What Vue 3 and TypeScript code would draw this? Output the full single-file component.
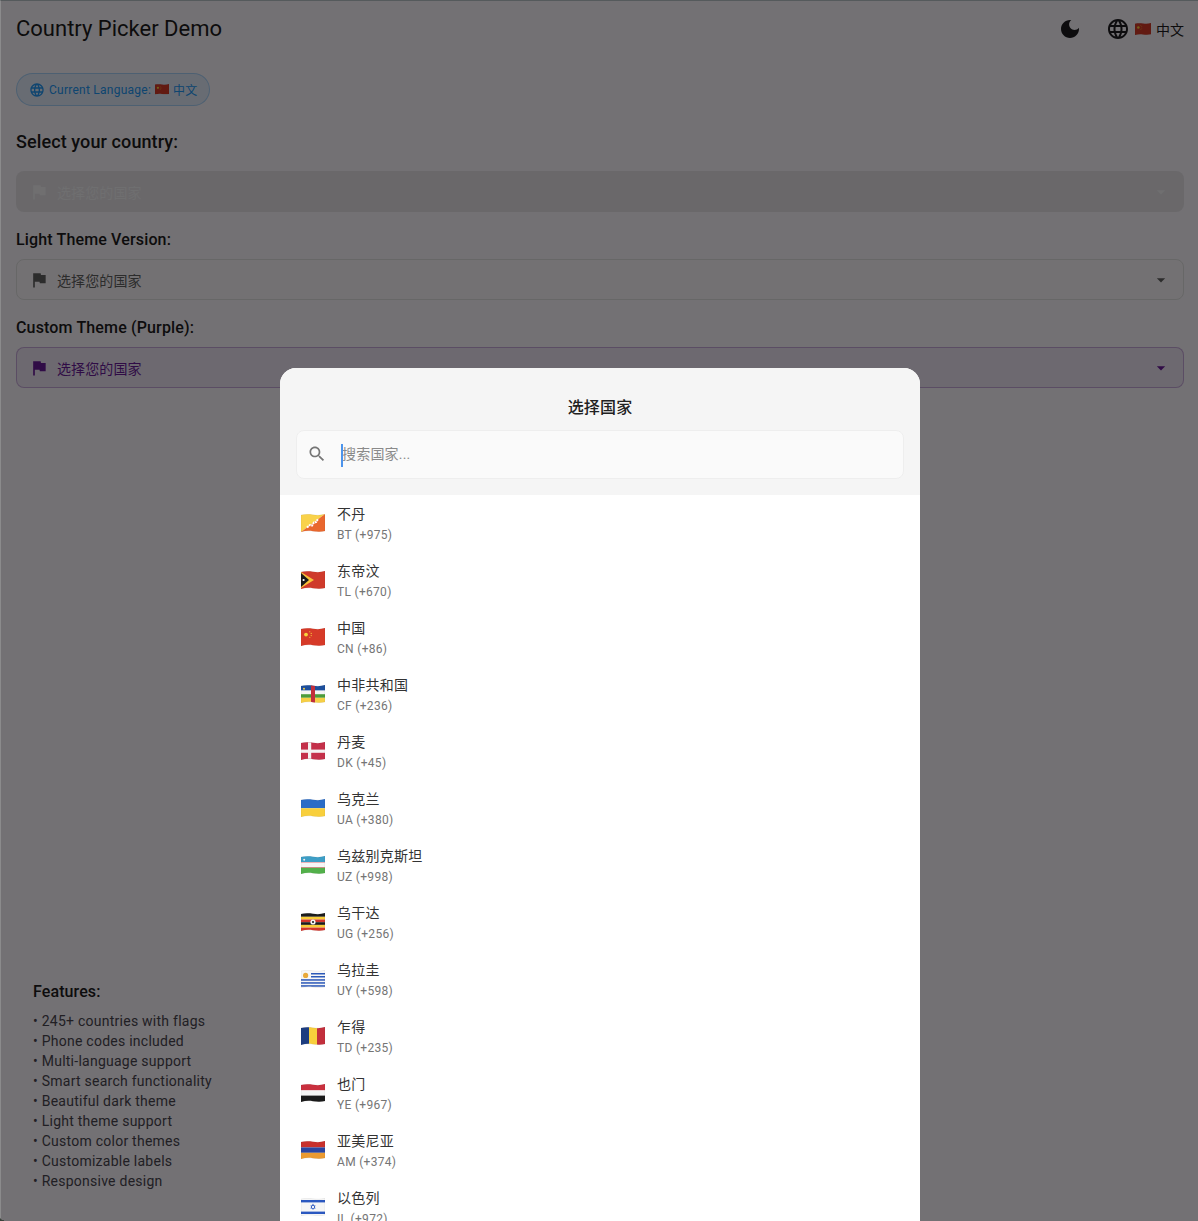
<template>
  <div class="page">
    <header class="appbar">
      <h1 class="title">Country Picker Demo</h1>
      <svg class="moon" viewBox="0 0 24 24"><path :d="icons.moon" /></svg>
      <div class="lang">
        <svg class="lang-globe" viewBox="0 0 24 24"><path :d="icons.globe" /></svg>
        <Flag code="CN" :width="16" />
        <span>中文</span>
      </div>
    </header>

    <main class="body">
      <div class="chip">
        <svg class="chip-globe" viewBox="0 0 24 24"><path :d="icons.globe" /></svg>
        <span>Current Language:</span>
        <Flag code="CN" :width="14" />
        <span>中文</span>
      </div>

      <h2 class="head">Select your country:</h2>
      <div class="field dark">
        <svg class="field-icon" viewBox="0 0 24 24"><path :d="icons.flag" /></svg>
        <span class="field-text">选择您的国家</span>
        <svg class="field-icon" viewBox="0 0 24 24"><path :d="icons.arrow" /></svg>
      </div>

      <h3 class="sub">Light Theme Version:</h3>
      <div class="field light">
        <svg class="field-icon" viewBox="0 0 24 24"><path :d="icons.flag" /></svg>
        <span class="field-text">选择您的国家</span>
        <svg class="field-icon" viewBox="0 0 24 24"><path :d="icons.arrow" /></svg>
      </div>

      <h3 class="sub">Custom Theme (Purple):</h3>
      <div class="field purple">
        <svg class="field-icon" viewBox="0 0 24 24"><path :d="icons.flag" /></svg>
        <span class="field-text">选择您的国家</span>
        <svg class="field-icon" viewBox="0 0 24 24"><path :d="icons.arrow" /></svg>
      </div>

      <section class="features">
        <h3 class="features-title">Features:</h3>
        <div v-for="f in features" :key="f" class="feature">• {{ f }}</div>
      </section>
    </main>

    <div class="scrim"></div>
    <div class="corner"></div>

    <div class="sheet">
      <div class="sheet-head">
        <div class="sheet-title">选择国家</div>
        <div class="search">
          <svg class="search-icon" viewBox="0 0 24 24"><path :d="icons.search" /></svg>
          <i class="caret"></i>
          <span class="hint">搜索国家...</span>
        </div>
      </div>
      <div class="list">
        <div v-for="c in countries" :key="c.code" class="item">
          <div class="item-flag"><Flag :code="c.code" :width="24" /></div>
          <div class="item-text">
            <div class="item-name">{{ c.name }}</div>
            <div class="item-code">{{ c.code }} ({{ c.dial }})</div>
          </div>
        </div>
      </div>
    </div>
  </div>
</template>

<script setup lang="ts">
import { h } from "vue";

const icons = {
  moon: "M12 3c-4.97 0-9 4.03-9 9s4.03 9 9 9 9-4.03 9-9c0-.46-.04-.92-.1-1.36-.98 1.37-2.58 2.26-4.4 2.26-2.98 0-5.4-2.42-5.4-5.4 0-1.81.89-3.42 2.26-4.4-.44-.06-.9-.1-1.36-.1z",
  globe:
    "M11.99 2C6.47 2 2 6.48 2 12s4.47 10 9.99 10C17.52 22 22 17.52 22 12S17.52 2 11.99 2zm6.93 6h-2.95c-.32-1.25-.78-2.45-1.38-3.56 1.84.63 3.37 1.91 4.33 3.56zM12 4.04c.83 1.2 1.48 2.53 1.91 3.96h-3.82c.43-1.43 1.08-2.76 1.91-3.96zM4.26 14C4.1 13.36 4 12.69 4 12s.1-1.36.26-2h3.38c-.08.66-.14 1.32-.14 2 0 .68.06 1.34.14 2H4.26zm.82 2h2.95c.32 1.25.78 2.45 1.38 3.56-1.84-.63-3.37-1.9-4.33-3.56zm2.95-8H5.08c.96-1.66 2.49-2.93 4.33-3.56C8.81 5.55 8.35 6.75 8.03 8zM12 19.96c-.83-1.2-1.48-2.53-1.91-3.96h3.82c-.43 1.43-1.08 2.76-1.91 3.96zM14.34 14H9.66c-.09-.66-.16-1.32-.16-2 0-.68.07-1.35.16-2h4.68c.09.65.16 1.32.16 2 0 .68-.07 1.34-.16 2zm.25 5.56c.6-1.11 1.06-2.31 1.38-3.56h2.95c-.96 1.65-2.49 2.93-4.33 3.56zM16.36 14c.08-.66.14-1.32.14-2 0-.68-.06-1.34-.14-2h3.38c.16.64.26 1.31.26 2s-.1 1.36-.26 2h-3.38z",
  flag: "M14.4 6L14 4H5v17h2v-7h5.6l.4 2h7V6z",
  arrow: "M7 10l5 5 5-5z",
  search:
    "M15.5 14h-.79l-.28-.27C15.41 12.59 16 11.11 16 9.5 16 5.91 13.09 3 9.5 3S3 5.91 3 9.5 5.91 16 9.5 16c1.61 0 3.09-.59 4.23-1.57l.27.28v.79l5 4.99L20.49 19l-4.99-5zm-6 0C7.01 14 5 11.99 5 9.5S7.01 5 9.5 5 14 7.01 14 9.5 11.99 14 9.5 14z",
};

const features = [
  "245+ countries with flags",
  "Phone codes included",
  "Multi-language support",
  "Smart search functionality",
  "Beautiful dark theme",
  "Light theme support",
  "Custom color themes",
  "Customizable labels",
  "Responsive design",
];

const countries = [
  { name: "不丹", code: "BT", dial: "+975" },
  { name: "东帝汶", code: "TL", dial: "+670" },
  { name: "中国", code: "CN", dial: "+86" },
  { name: "中非共和国", code: "CF", dial: "+236" },
  { name: "丹麦", code: "DK", dial: "+45" },
  { name: "乌克兰", code: "UA", dial: "+380" },
  { name: "乌兹别克斯坦", code: "UZ", dial: "+998" },
  { name: "乌干达", code: "UG", dial: "+256" },
  { name: "乌拉圭", code: "UY", dial: "+598" },
  { name: "乍得", code: "TD", dial: "+235" },
  { name: "也门", code: "YE", dial: "+967" },
  { name: "亚美尼亚", code: "AM", dial: "+374" },
  { name: "以色列", code: "IL", dial: "+972" },
];

type Shape = [string, Record<string, string | number>];

const rect = (x: number, y: number, width: number, height: number, fill: string): Shape => [
  "rect",
  { x, y, width, height, fill },
];
const poly = (points: string, fill: string): Shape => ["polygon", { points, fill }];
const circle = (cx: number, cy: number, r: number, fill: string): Shape => ["circle", { cx, cy, r, fill }];

const wave = "M0 1C4 .1 8 .2 12 .8S20 1.4 24 .1V17C20 18 16 17.8 12 17.2S4 16.8 0 18Z";

// flags are drawn on a 24x18 box, then cut to the waving outline
const flags: Record<string, Shape[]> = {
  BT: [
    poly("0,0 24,0 0,18", "#f9d24a"),
    poly("24,0 24,18 0,18", "#e9672e"),
    ["path", { d: "M6 13.5 L9 11 L11 11.5 L13 8.5 L15 8 L17 5", stroke: "#fff", "stroke-width": 2, "stroke-dasharray": "2 .6", fill: "none" }],
  ],
  TL: [rect(0, 0, 24, 18, "#cf3a2b"), poly("0,1 13,9 0,17", "#f8c13a"), poly("0,2 8,9 0,16", "#1a1a1a"), circle(2.6, 9, 1.1, "#fff")],
  CN: [
    rect(0, 0, 24, 18, "#d63a28"),
    circle(5, 6.6, 1.9, "#f8d43c"),
    circle(8.8, 3.8, 0.55, "#f8d43c"),
    circle(10.2, 5.4, 0.55, "#f8d43c"),
    circle(10.2, 7.6, 0.55, "#f8d43c"),
    circle(8.8, 9.2, 0.55, "#f8d43c"),
  ],
  CF: [
    rect(0, 0, 24, 5.6, "#1d4f9c"),
    rect(0, 5.6, 24, 3.6, "#f5f5f5"),
    rect(0, 9.2, 24, 3.6, "#4c9c3c"),
    rect(0, 12.8, 24, 5.2, "#f6cf45"),
    rect(10, 0, 4, 18, "#c22f3c"),
    circle(3, 3.8, 1, "#f6cf45"),
  ],
  DK: [rect(0, 0, 24, 18, "#c4304a"), rect(7, 0, 3.2, 18, "#f4f1f1"), rect(0, 7.6, 24, 3.2, "#f4f1f1")],
  UA: [rect(0, 0, 24, 9.2, "#2b6cc6"), rect(0, 9.2, 24, 8.8, "#f8cf3c")],
  UZ: [
    rect(0, 0, 24, 6, "#3d9ec6"),
    rect(0, 6, 24, 0.6, "#d8394a"),
    rect(0, 6.6, 24, 4.6, "#f6f6f6"),
    rect(0, 11.2, 24, 0.6, "#d8394a"),
    rect(0, 11.8, 24, 6.2, "#52b04a"),
    circle(3.2, 3.8, 1, "#f0f0f0"),
  ],
  UG: [
    rect(0, 0, 24, 3.8, "#1c1c1c"),
    rect(0, 3.8, 24, 2.7, "#f8cd38"),
    rect(0, 6.5, 24, 2.7, "#d3352c"),
    rect(0, 9.2, 24, 2.7, "#1c1c1c"),
    rect(0, 11.9, 24, 2.7, "#f8cd38"),
    rect(0, 14.6, 24, 3.4, "#d3352c"),
    circle(12, 9, 2.6, "#f5f5f5"),
    circle(12, 9, 1.1, "#222"),
  ],
  UY: [
    rect(0, 0, 24, 18, "#f6f6f6"),
    rect(10, 3, 14, 1.5, "#2b58b8"),
    rect(10, 6, 14, 1.5, "#2b58b8"),
    rect(0, 9.2, 24, 1.5, "#2b58b8"),
    rect(0, 12.2, 24, 1.5, "#2b58b8"),
    rect(0, 15.2, 24, 1.5, "#2b58b8"),
    circle(4.6, 5.4, 2.6, "#e8a93a"),
  ],
  TD: [rect(0, 0, 8, 18, "#1d3d80"), rect(8, 0, 8, 18, "#f8cf3c"), rect(16, 0, 8, 18, "#c22f3c")],
  YE: [rect(0, 0, 24, 6.4, "#c9303e"), rect(0, 6.4, 24, 5.2, "#f5f5f5"), rect(0, 11.6, 24, 6.4, "#1a1a1a")],
  AM: [rect(0, 0, 24, 6.4, "#c8302c"), rect(0, 6.4, 24, 5.4, "#2a45a0"), rect(0, 11.8, 24, 6.2, "#eb9a30")],
  IL: [
    rect(0, 0, 24, 18, "#f6f6f6"),
    rect(0, 2, 24, 2.4, "#2b58c0"),
    rect(0, 13.6, 24, 2.4, "#2b58c0"),
    poly("12,5.6 14.6,10.6 9.4,10.6", "#2b58c0"),
    poly("12,12 14.6,7.4 9.4,7.4", "#2b58c0"),
    circle(12, 9, 1.2, "#f6f6f6"),
  ],
};

let uid = 0;

function Flag(props: { code: string; width: number }) {
  const id = `wave-${props.code}-${uid++}`;
  return h("svg", { viewBox: "0 0 24 18", width: props.width, height: (props.width * 18) / 24, style: "flex:none;display:block" }, [
    h("clipPath", { id }, [h("path", { d: wave })]),
    h("g", { "clip-path": `url(#${id})` }, (flags[props.code] ?? []).map(([tag, attrs]) => h(tag, attrs))),
    h("path", { d: wave, fill: "none", stroke: "rgba(0,0,0,.14)", "stroke-width": 0.4 }),
  ]);
}
Flag.props = ["code", "width"];
</script>

<style>
html,
body {
  margin: 0;
  height: 100%;
  overflow: hidden;
}
</style>

<style scoped>
.page {
  position: relative;
  height: 1221px;
  overflow: hidden;
  display: flex;
  flex-direction: column;
  background: #faf6fc;
  color: #1d1b20;
  font-family: Roboto, "Noto Sans CJK SC", sans-serif;
}
.appbar {
  height: 57px;
  flex: none;
  display: flex;
  align-items: center;
  padding: 0 14px 0 16px;
  box-sizing: border-box;
}
.title {
  margin: 0;
  flex: 1;
  font-size: 22px;
  font-weight: 400;
}
.moon {
  width: 24px;
  height: 24px;
  fill: #1d1b20;
  margin-right: 24px;
}
.lang {
  display: flex;
  align-items: center;
  gap: 5px;
  font-size: 14px;
}
.lang-globe {
  width: 24px;
  height: 24px;
  fill: #1d1b20;
}
.body {
  flex: 1;
  display: flex;
  flex-direction: column;
  padding: 16px 14px 13px 16px;
  min-height: 0;
}
.chip {
  align-self: flex-start;
  box-sizing: border-box;
  height: 33px;
  display: flex;
  align-items: center;
  gap: 4px;
  padding: 0 11px 0 12px;
  border: 1px solid rgba(33, 150, 243, 0.3);
  border-radius: 17px;
  background: rgba(33, 150, 243, 0.1);
  color: #2196f3;
  font-size: 12px;
  letter-spacing: 0.25px;
}
.chip-globe {
  width: 16px;
  height: 16px;
  fill: #2196f3;
}
.head {
  margin: 24px 0 17px;
  font-size: 18px;
  line-height: 24px;
  font-weight: 500;
  letter-spacing: 0.1px;
}
.sub {
  margin: 16px 0 7px;
  font-size: 16px;
  line-height: 24px;
  font-weight: 500;
  letter-spacing: 0.15px;
}
.field {
  box-sizing: border-box;
  height: 41px;
  display: flex;
  align-items: center;
  padding: 0 12px;
  border: 1px solid transparent;
  border-radius: 8px;
  font-size: 14px;
  fill: currentColor;
}
.field-icon {
  width: 20px;
  height: 20px;
  flex: none;
}
.field-text {
  flex: 1;
  margin-left: 8px;
  letter-spacing: 0.1px;
}
.dark {
  background: #e6e3e8;
  color: rgba(255, 255, 255, 0.5);
}
.light {
  background: #fbf7fb;
  border-color: #e0e0e0;
  color: #616161;
}
.purple {
  background: rgba(106, 27, 154, 0.08);
  border-color: rgba(106, 27, 154, 0.3);
  color: #6a1b9a;
}
.features {
  margin-top: auto;
  padding: 16px;
  border: 1px solid transparent;
}
.features-title {
  margin: 0 0 7px;
  font-size: 16px;
  line-height: 24px;
  font-weight: 500;
  letter-spacing: 0.1px;
}
.feature {
  font-size: 14px;
  line-height: 20px;
  letter-spacing: 0.25px;
  color: #49454f;
}
.scrim {
  position: absolute;
  inset: 0;
  background: rgba(0, 0, 0, 0.54);
  border-top: 1px solid #555a5c;
  border-left: 1px solid #8b8b8c;
}
.corner {
  position: absolute;
  left: 0;
  bottom: 0;
  width: 4px;
  height: 5px;
  background: radial-gradient(circle at 100% 0, transparent 4px, #39423a 4.6px);
}
.sheet {
  position: absolute;
  left: 280px;
  top: 368px;
  width: 640px;
  height: 900px;
  border-radius: 16px 16px 0 0;
  overflow: hidden;
  background: #fff;
}
.sheet-head {
  height: 127px;
  box-sizing: border-box;
  padding: 16px 16px 0;
  background: #f5f5f5;
}
.sheet-title {
  text-align: center;
  font-size: 16px;
  line-height: 48px;
  height: 46px;
  font-weight: 500;
  color: #212121;
  letter-spacing: 0.15px;
}
.search {
  position: relative;
  box-sizing: border-box;
  height: 49px;
  display: flex;
  align-items: center;
  padding: 0 10px;
  border: 1px solid #eeeeee;
  border-radius: 8px;
  background: #fafafa;
}
.search-icon {
  width: 20px;
  height: 20px;
  fill: #757575;
  margin-top: -2px;
}
.caret {
  position: absolute;
  left: 44px;
  top: 13px;
  width: 2px;
  height: 23px;
  background: #4c94ec;
}
.hint {
  margin: -4px 0 0 15px;
  font-size: 14px;
  letter-spacing: 0.2px;
  color: #8a8a8a;
}
.item {
  height: 57px;
  display: flex;
  align-items: center;
  padding-left: 21px;
}
.item-flag {
  margin-top: -2px;
}
.item-text {
  margin-left: 12px;
}
.item-name {
  font-size: 14px;
  line-height: 20px;
  letter-spacing: 0.25px;
  color: #333;
}
.item-code {
  font-size: 12px;
  line-height: 16px;
  margin-top: 3px;
  letter-spacing: 0.3px;
  color: #757575;
}
</style>
